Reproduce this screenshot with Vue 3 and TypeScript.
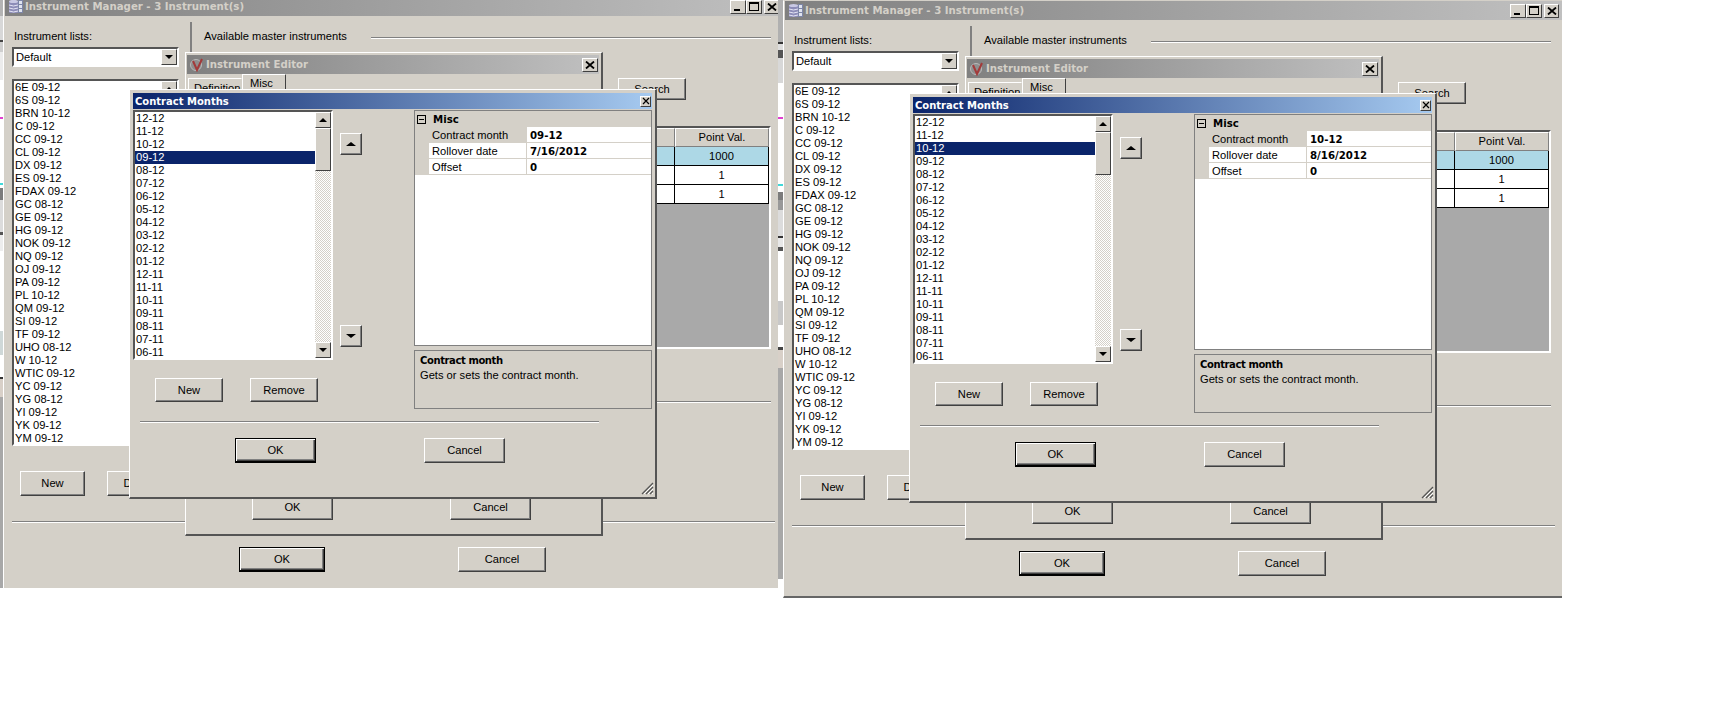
<script setup lang="ts">
interface Shot {
  cls: string
  selected: string
  rollover: string
}

const shots: Shot[] = [
  { cls: 'shot-a', selected: '09-12', rollover: '7/16/2012' },
  { cls: 'shot-b', selected: '10-12', rollover: '8/16/2012' }
]

const instruments = [
  '6E 09-12', '6S 09-12', 'BRN 10-12', 'C 09-12', 'CC 09-12', 'CL 09-12', 'DX 09-12',
  'ES 09-12', 'FDAX 09-12', 'GC 08-12', 'GE 09-12', 'HG 09-12', 'NOK 09-12', 'NQ 09-12',
  'OJ 09-12', 'PA 09-12', 'PL 10-12', 'QM 09-12', 'SI 09-12', 'TF 09-12', 'UHO 08-12',
  'W 10-12', 'WTIC 09-12', 'YC 09-12', 'YG 08-12', 'YI 09-12', 'YK 09-12', 'YM 09-12'
]

const months = [
  '12-12', '11-12', '10-12', '09-12', '08-12', '07-12', '06-12', '05-12', '04-12', '03-12',
  '02-12', '01-12', '12-11', '11-11', '10-11', '09-11', '08-11', '07-11', '06-11'
]

// Slivers of the desktop that show beside each pasted window: [height, colour]
const leftSliver: [number, string][] = [
  [16, '#b4b4b4'], [24, '#d8d8d8'], [2, '#444'], [10, '#cfcfcf'], [28, '#ececec'], [37, '#fff'],
  [2, '#e040d0'], [64, '#fff'], [2, '#40d8d8'], [3, '#fff'], [12, '#7c7c7c'], [32, '#dcdcdc'],
  [3, '#555'], [16, '#ededed'], [80, '#fff'], [24, '#cfd8d8'], [22, '#fff'], [2, '#333'],
  [18, '#d8d0c8'], [209, '#a8a8a8']
]
const rightSliver: [number, string][] = [
  [42, '#b0b0b0'], [2, '#333'], [6, '#ddd'], [8, '#555'], [25, '#d8d8d8'], [34, '#fff'],
  [2, '#e040d0'], [65, '#fff'], [2, '#40d8d8'], [6, '#fff'], [8, '#7c7c7c'], [10, '#999'],
  [26, '#dcdcdc'], [2, '#333'], [9, '#e8e8e8'], [4, '#555'], [50, '#fff'], [24, '#c8c8c8'],
  [22, '#fff'], [3, '#444'], [18, '#d8d0c8'], [211, '#a8a8a8']
]
</script>

<template>
  <div class="desk">
    <div v-for="s in shots" :key="s.cls" class="shot" :class="s.cls">
      <section class="mgr">
        <header class="bar mgr-bar">
          <svg class="db" width="15" height="15" viewBox="0 0 15 15">
            <rect x="1" y="2" width="9" height="12" rx="1" fill="#8d8db8" />
            <ellipse cx="5.5" cy="2.5" rx="4.5" ry="1.6" fill="#c9c9e4" />
            <path d="M1 6q4.5 2 9 0M1 9q4.5 2 9 0M1 12q4.5 2 9 0" stroke="#e4e4f4" fill="none" />
            <rect x="10.500" y="1.500" width="4" height="12" fill="#dfe3ee" stroke="#7d86a8" />
            <path d="M10.500 5.500h4M10.500 9.500h4" stroke="#7d86a8" />
          </svg>
          <span class="cap">Instrument Manager - 3 Instrument(s)</span>
          <span class="controls">
            <span class="ctl"><i class="glyph-min"></i></span>
            <span class="ctl"><i class="glyph-max"></i></span>
            <span class="ctl ctl-close">
              <svg width="10" height="8" viewBox="0 0 10 8"><path d="M1 0.500 9 7.500M9 0.500 1 7.500" stroke="#000" stroke-width="1.800" /></svg>
            </span>
          </span>
        </header>

        <div class="mgr-main">
          <div class="lists">
            <div class="label">Instrument lists:</div>
            <div class="combo sunken">
              <span class="combo-text">Default</span>
              <span class="sb-btn combo-btn"><i class="tri-down"></i></span>
            </div>
            <div class="inst-list sunken">
              <ul class="rows">
                <li v-for="item in instruments" :key="item">{{ item }}</li>
              </ul>
              <div class="sb-col"><span class="sb-btn"><i class="tri-up"></i></span></div>
            </div>
            <div class="list-btns">
              <button class="btn w65">New</button>
              <button class="btn w65">Delete</button>
            </div>
          </div>

          <div class="masters">
            <div class="legend">
              <span>Available master instruments</span>
              <span class="etched legend-line"></span>
            </div>
            <button class="btn search">Search</button>
            <div class="grid">
              <div class="cell head"></div>
              <div class="cell head">Point Val.</div>
              <div class="cell blue"></div>
              <div class="cell blue">1000</div>
              <div class="cell"></div>
              <div class="cell">1</div>
              <div class="cell"></div>
              <div class="cell">1</div>
            </div>
            <div class="etched group-end"></div>
          </div>
        </div>

        <div class="etched mgr-sep"></div>
        <div class="mgr-foot">
          <button class="btn default w86">OK</button>
          <button class="btn w88">Cancel</button>
        </div>

        <section class="editor">
          <header class="bar ed-bar">
            <svg class="swirl" width="14" height="14" viewBox="0 0 14 14">
              <circle cx="6" cy="7" r="5.500" fill="#8f8f8f" stroke="#b9b9b9" />
              <path d="M3 3 7 12 12 1" fill="none" stroke="#a33a3a" stroke-width="2" />
            </svg>
            <span class="cap">Instrument Editor</span>
            <span class="ctl ed-close">
              <svg width="10" height="8" viewBox="0 0 10 8"><path d="M1 0.500 9 7.500M9 0.500 1 7.500" stroke="#000" stroke-width="1.800" /></svg>
            </span>
          </header>
          <div class="tabs">
            <span class="tab">Definition</span>
            <span class="tab tab-on">Misc</span>
          </div>
          <div class="ed-foot">
            <button class="btn w81">OK</button>
            <button class="btn w81">Cancel</button>
          </div>
        </section>

        <section class="dialog">
          <header class="dlg-bar">
            <span class="cap dlg-cap">Contract Months</span>
            <span class="ctl dlg-close">
              <svg width="8" height="8" viewBox="0 0 8 8"><path d="M1 1 7 7M7 1 1 7" stroke="#000" stroke-width="1.200" /></svg>
            </span>
          </header>

          <div class="dlg-main">
            <div class="dlg-left">
              <div class="month-list sunken">
                <ul class="rows">
                  <li v-for="m in months" :key="m" :class="{ sel: m === s.selected }">{{ m }}</li>
                </ul>
                <div class="sb-col">
                  <span class="sb-btn"><i class="tri-up"></i></span>
                  <span class="sb-btn thumb"></span>
                  <span class="track"></span>
                  <span class="sb-btn"><i class="tri-down"></i></span>
                </div>
              </div>
              <div class="dlg-btns">
                <button class="btn w68">New</button>
                <button class="btn w68">Remove</button>
              </div>
            </div>

            <div class="movers">
              <button class="btn mover"><i class="tri-up big"></i></button>
              <button class="btn mover"><i class="tri-down big"></i></button>
            </div>

            <div class="props">
              <div class="pgrid">
                <div class="cat"><i class="minus"></i><b class="strong">Misc</b></div>
                <div class="prow">
                  <span class="pname active">Contract month</span>
                  <b class="strong pval">{{ s.selected }}</b>
                </div>
                <div class="prow">
                  <span class="pname">Rollover date</span>
                  <b class="strong pval">{{ s.rollover }}</b>
                </div>
                <div class="prow">
                  <span class="pname">Offset</span>
                  <b class="strong pval">0</b>
                </div>
              </div>
              <div class="help">
                <b class="strong help-title">Contract month</b>
                <div>Gets or sets the contract month.</div>
              </div>
            </div>
          </div>

          <div class="etched dlg-sep"></div>
          <div class="dlg-foot">
            <button class="btn default w81">OK</button>
            <button class="btn w81">Cancel</button>
          </div>

          <svg class="grip" width="13" height="13" viewBox="0 0 13 13">
            <path d="M12 1 1 12M12 5 5 12M12 9 9 12" stroke="#555" stroke-width="1.300" />
            <path d="M12 3 3 12M12 7 7 12M12 11 11 12" stroke="#fff" stroke-width="1" />
          </svg>
        </section>
      </section>
    </div>

    <div class="sliver sliver-a">
      <i v-for="(seg, i) in leftSliver" :key="i" :style="{ height: seg[0] + 'px', background: seg[1] }"></i>
    </div>
    <div class="sliver sliver-b">
      <i v-for="(seg, i) in rightSliver" :key="i" :style="{ height: seg[0] + 'px', background: seg[1] }"></i>
    </div>
  </div>
</template>

<style scoped>
.desk {
  position: relative;
  width: 1711px;
  height: 727px;
  overflow: hidden;
  background: #fff;
  color: #000;
  font: 11.15px/13px "Liberation Sans", Arial, sans-serif;
}
.strong,
.cap {
  font-family: "DejaVu Sans", Verdana, sans-serif;
  font-weight: 700;
  font-size: 10.2px;
}
.dlg-cap { font-size: 10px; }
.help-title { font-size: 10px; letter-spacing: -0.4px; }
ul { list-style: none; margin: 0; padding: 0; }

/* each pasted screenshot is a window on a free canvas */
.shot { position: absolute; top: 0; overflow: hidden; }
.shot-a { left: 0; width: 778px; height: 588px; }
.shot-b { left: 780px; width: 782px; height: 598px; }
.sliver { position: absolute; top: 0; display: flex; flex-direction: column; }
.sliver i { display: block; flex: none; }
.sliver-a { left: 0; width: 3px; height: 588px; overflow: hidden; }
.sliver-b { left: 778px; width: 5px; height: 598px; overflow: hidden; }

.mgr {
  position: absolute;
  left: 3px;
  top: 0;
  box-sizing: border-box;
  width: 779px;
  height: 598px;
  background: #d4d0c8;
  border-left: 1px solid #fff;
  border-top: 1px solid #d4d0c8;
  border-bottom: 2px solid #666;
  display: flex;
  flex-direction: column;
}
.shot-a .mgr { top: -4px; }

.bar {
  display: flex;
  align-items: center;
  background: linear-gradient(90deg, #808080, #c0c0c0);
  color: #d4d0c8;
}
.mgr-bar { height: 19px; margin-left: 1px; padding-left: 3px; flex: none; }
.db { margin-right: 2px; }
.controls { margin-left: auto; margin-right: 3px; display: flex; }
.ctl {
  box-sizing: border-box;
  width: 16px;
  height: 14px;
  display: flex;
  align-items: center;
  justify-content: center;
  background: #d4d0c8;
  border: 1px solid;
  border-color: #fff #404040 #404040 #fff;
}
.ctl-close { margin-left: 2px; width: 15px; }
.glyph-min { width: 6px; height: 2px; background: #000; margin-top: 7px; margin-right: 3px; }
.glyph-max { box-sizing: border-box; width: 10px; height: 9px; border: 1px solid #000; border-top-width: 2px; }

.mgr-main { display: flex; height: 505px; flex: none; }
.lists { width: 167px; margin-left: 8px; display: flex; flex-direction: column; }
.label { margin-top: 14px; padding-left: 2px; }
.sunken {
  box-sizing: border-box;
  border: 2px solid;
  border-color: #555 #fff #fff #555;
  background: #fff;
}
.combo { margin-top: 4px; height: 20px; display: flex; align-items: center; padding-left: 2px; }
.combo-text { flex: 1; }
.combo-btn { height: 16px; }
.inst-list { margin-top: 12px; height: 367px; display: flex; overflow: hidden; }
.rows { flex: 1; min-width: 0; overflow: hidden; }
.rows li { height: 13px; padding-left: 1px; white-space: nowrap; }
.rows li.sel { background: #0a246a; color: #fff; }
.sb-col { width: 16px; display: flex; flex-direction: column; flex: none; }
.sb-btn {
  box-sizing: border-box;
  width: 16px;
  height: 16px;
  flex: none;
  display: flex;
  align-items: center;
  justify-content: center;
  background: #d4d0c8;
  border: 1px solid;
  border-color: #fff #404040 #404040 #fff;
}
.thumb { height: 43px; }
.track {
  flex: 1;
  background: repeating-conic-gradient(#fff 0 25%, #d4d0c8 0 50%) 0 0 / 2px 2px;
}
.tri-up, .tri-down { width: 0; height: 0; border-left: 4px solid transparent; border-right: 4px solid transparent; }
.tri-up { border-bottom: 4px solid #000; }
.tri-down { border-top: 4px solid #000; }
.big { border-left-width: 5px; border-right-width: 5px; }
.list-btns { margin-top: 25px; margin-left: 8px; display: flex; gap: 22px; }

.btn {
  box-sizing: border-box;
  height: 25px;
  padding: 0;
  display: flex;
  align-items: center;
  justify-content: center;
  font: inherit;
  color: #000;
  background: #d4d0c8;
  border: 1px solid;
  border-color: #fff #404040 #404040 #fff;
  box-shadow: inset -1px -1px 0 #808080;
}
.default {
  border-color: #000;
  border-bottom-width: 2px;
  box-shadow: inset 1px 1px 0 #fff, inset -1px -1px 0 #404040, inset -2px -2px 0 #808080;
}
.w65 { width: 65px; }
.w68 { width: 68px; height: 24px; }
.w81 { width: 81px; }
.w86 { width: 86px; }
.w88 { width: 88px; }

.masters {
  margin: 6px 0 0 11px;
  width: 581px;
  box-sizing: border-box;
  padding-left: 12px;
  border-left: 2px solid;
  border-image: linear-gradient(90deg, #808080 50%, #fff 50%) 1;
  display: flex;
  flex-direction: column;
  align-items: flex-end;
  height: 410px;
}
.legend { align-self: stretch; margin-top: 8px; display: flex; align-items: center; gap: 24px; }
.etched { height: 2px; background: linear-gradient(#808080 50%, #fff 50%); flex: none; }
.legend-line { flex: 1; margin-top: 2px; }
.search { width: 68px; height: 22px; margin-top: 35px; margin-right: 85px; }
.grid {
  box-sizing: border-box;
  margin-top: 26px;
  width: 173px;
  height: 223px;
  background: #a9a9a9;
  border: 2px solid;
  border-color: #555 #fff #fff #555;
  display: grid;
  grid-template-columns: 75px 94px;
  grid-auto-rows: 19px;
  align-content: start;
}
.cell {
  box-sizing: border-box;
  display: flex;
  align-items: center;
  justify-content: center;
  background: #fff;
  border-right: 1px solid #000;
  border-bottom: 1px solid #000;
}
.blue { background: #add8e6; }
.head {
  background: #d4d0c8;
  border: 1px solid;
  border-color: #fff #808080 #808080 #fff;
}
.group-end { width: 168px; margin-top: 52px; }

.mgr-sep { margin: 0 7px 0 8px; }
.mgr-foot { margin: 24px 0 0 235px; display: flex; gap: 133px; }

.editor {
  position: absolute;
  left: 181px;
  top: 55px;
  box-sizing: border-box;
  width: 418px;
  height: 484px;
  background: #d4d0c8;
  border: solid;
  border-color: #fff #555 #555 #fff;
  border-width: 1px 2px 2px 1px;
  padding: 2px 2px 0 1px;
  display: flex;
  flex-direction: column;
}
.ed-bar { height: 19px; flex: none; padding-left: 3px; }
.swirl { margin-right: 2px; }
.ed-close { margin-left: auto; margin-right: 1px; }
.tabs { display: flex; align-items: flex-end; height: 20px; padding-left: 1px; }
.tab {
  box-sizing: border-box;
  width: 54px;
  height: 16px;
  padding: 3px 0 0 5px;
  border: 1px solid;
  border-color: #fff #d4d0c8 #d4d0c8 #fff;
}
.tab-on { width: 44px; height: 20px; padding: 2px 0 0 7px; border-right-color: #404040; }
.ed-foot { margin-top: auto; margin-bottom: 14px; margin-left: 65px; display: flex; gap: 117px; }

.dialog {
  position: absolute;
  left: 125px;
  top: 92px;
  box-sizing: border-box;
  width: 528px;
  height: 410px;
  background: #d4d0c8;
  border: solid;
  border-color: #fff #555 #555 #fff;
  border-width: 1px 2px 2px 1px;
  padding: 3px 3px 0 3px;
  display: flex;
  flex-direction: column;
}
.dlg-bar {
  height: 16px;
  flex: none;
  display: flex;
  align-items: center;
  padding-left: 2px;
  color: #fff;
  background: linear-gradient(90deg, #0a246a, #a6caf0);
}
.dlg-close { width: 11px; height: 11px; margin-left: auto; margin-right: 1px; }
.dlg-main { display: flex; height: 299px; margin-top: 1px; flex: none; }
.dlg-left { width: 200px; flex: none; }
.month-list { height: 250px; display: flex; overflow: hidden; }
.dlg-btns { margin: 18px 0 0 22px; display: flex; gap: 27px; }
.movers { margin: 23px 0 0 7px; width: 22px; flex: none; display: flex; flex-direction: column; gap: 170px; }
.mover { width: 22px; height: 22px; }
.props { margin-left: 52px; width: 238px; flex: none; }
.pgrid { box-sizing: border-box; height: 236px; background: #fff; border: 1px solid #808080; }
.cat { height: 16px; background: #d4d0c8; display: flex; align-items: center; padding-left: 2px; gap: 7px; }
.minus {
  box-sizing: border-box;
  width: 9px;
  height: 9px;
  border: 1px solid #000;
  background: linear-gradient(#000, #000) center / 5px 1px no-repeat;
}
.prow {
  height: 16px;
  box-sizing: border-box;
  display: flex;
  align-items: center;
  border-left: 14px solid #d4d0c8;
  border-bottom: 1px solid #d4d0c8;
}
.pname { align-self: stretch; display: flex; align-items: center; width: 98px; box-sizing: border-box; padding: 1px 0 0 3px; border-right: 1px solid #d4d0c8; flex: none; }
.pname.active { background: #d4d0c8; }
.pval { padding: 1px 0 0 3px; }
.help { box-sizing: border-box; margin-top: 4px; height: 59px; border: 1px solid #808080; padding: 2px 0 0 5px; line-height: 15px; }
.dlg-sep { width: 459px; margin: 12px 0 0 7px; }
.dlg-foot { margin: 15px 0 0 102px; display: flex; gap: 108px; }
.grip { position: absolute; right: 1px; bottom: 2px; }
</style>

<style>
html, body { background: #fff; }
</style>
